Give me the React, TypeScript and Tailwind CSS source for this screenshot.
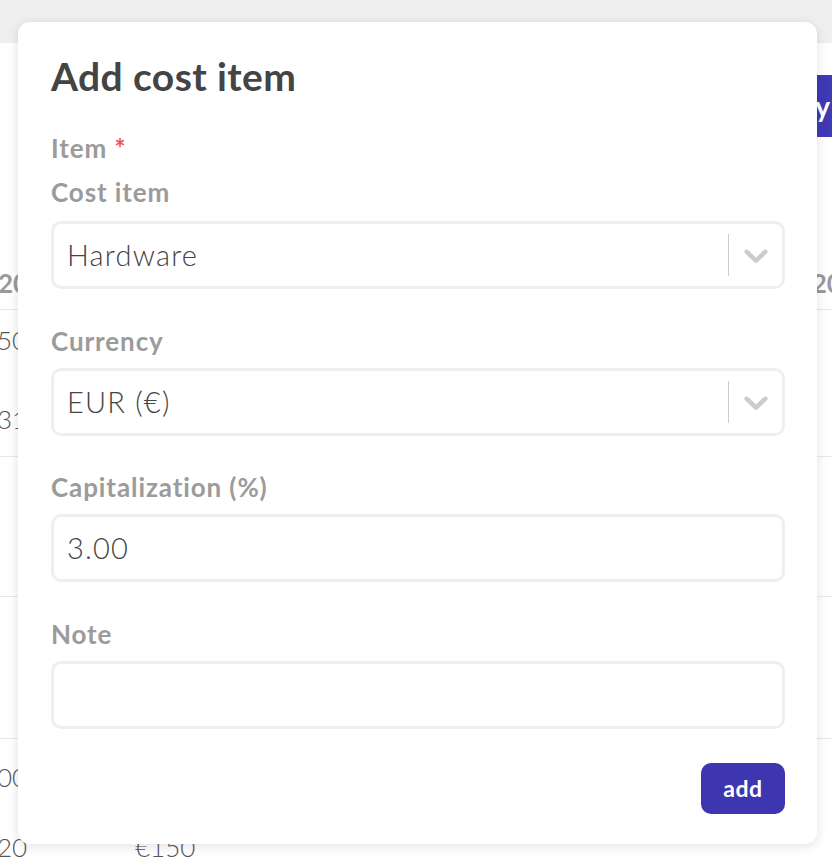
import { ReactNode } from 'react'

const font = { fontFamily: 'Lato, "Noto Sans", sans-serif' }

function Chevron() {
  return (
    <svg className="h-10 w-10 fill-[#cccccc]" viewBox="0 0 20 20" aria-hidden="true">
      <path d="M4.516 7.548c0.436-0.446 1.043-0.481 1.576 0l3.908 3.747 3.908-3.747c0.533-0.481 1.141-0.446 1.574 0 0.436 0.445 0.408 1.197 0 1.615-0.406 0.418-4.695 4.502-4.695 4.502-0.217 0.223-0.502 0.335-0.787 0.335s-0.57-0.112-0.789-0.335c0 0-4.287-4.084-4.695-4.502s-0.436-1.17 0-1.615z" />
    </svg>
  )
}

function Label({ children, className = '' }: { children: ReactNode; className?: string }) {
  return (
    <div className={`h-[30px] text-[26px] leading-[28px] font-bold tracking-[0.9px] text-[#9b9b9b] ${className}`}>
      {children}
    </div>
  )
}

function Select({ value }: { value: string }) {
  return (
    <div className="flex h-[68px] items-center rounded-[10px] border-[3px] border-[#efefef] bg-white">
      <span className="flex-1 pl-[13px] text-[29px] font-light tracking-[1.2px] text-[#444444]">{value}</span>
      <span className="h-[42px] w-px bg-[#cccccc]" />
      <span className="flex w-[53px] items-center justify-center">
        <Chevron />
      </span>
    </div>
  )
}

function Input({ value = '' }: { value?: string }) {
  return (
    <div className="flex h-[68px] items-center rounded-[10px] border-[3px] border-[#efefef] bg-white pl-[13px] text-[29px] font-light tracking-[1.2px] text-[#444444]">
      {value}
    </div>
  )
}

function Background() {
  return (
    <div className="h-[858px] overflow-hidden bg-white text-[26px] font-light text-[#555555]">
      <div className="h-[43px] bg-[#efefef]" />
      <div className="flex justify-end pt-[32px]">
        <div className="-mr-[40px] flex h-[62px] w-[100px] items-center justify-end rounded-[8px] bg-[#3f3ab5] pr-[42px] text-[28px] font-bold text-white">
          ry
        </div>
      </div>
      <div className="mt-[127px] flex h-[46px] items-start justify-between border-b border-[#e8e8e8] font-bold text-[#9b9b9b]">
        <span className="-ml-[2px]">2024</span>
        <span className="-mr-[40px]">2024</span>
      </div>
      <div className="flex h-[147px] justify-between border-b border-[#e8e8e8]">
        <div className="-ml-[3px] flex flex-col pt-[14px]">
          <span className="leading-[32px]">50</span>
          <span className="mt-[47px] leading-[32px]">31</span>
        </div>
        <div className="-mr-[40px] pt-[14px] leading-[32px]">50</div>
      </div>
      <div className="h-[140px] border-b border-[#e8e8e8]" />
      <div className="h-[142px] border-b border-[#e8e8e8]" />
      <div className="flex justify-between">
        <div className="flex">
          <div className="-ml-[3px] flex w-[138px] flex-col pt-[22px]">
            <span className="leading-[32px]">00</span>
            <span className="mt-[38px] leading-[32px]">20</span>
          </div>
          <div className="pt-[92px] leading-[32px]">€150</div>
        </div>
        <div className="-mr-[40px] pt-[22px] leading-[32px]">00</div>
      </div>
    </div>
  )
}

export default function App() {
  return (
    <div className="relative h-[858px] w-[832px] overflow-hidden" style={font}>
      <Background />
      <div className="absolute left-[18px] top-[22px] w-[799px] rounded-[12px] bg-white pb-[30px] pl-[33px] pr-[32px] pt-[34px] shadow-[0_2px_12px_rgba(0,0,0,0.12)]">
        <h2 className="h-10 text-[39px] leading-10 font-bold tracking-[0.4px] text-[#444444]">Add cost item</h2>

        <Label className="mt-[38px]">
          Item <span className="text-[#ef5350]">*</span>
        </Label>
        <Label className="mt-[14px]">Cost item</Label>
        <div className="mt-[13px]">
          <Select value="Hardware" />
        </div>

        <Label className="mt-[38px]">Currency</Label>
        <div className="mt-[11px]">
          <Select value="EUR (€)" />
        </div>

        <Label className="mt-[37px]">Capitalization (%)</Label>
        <div className="mt-[11px]">
          <Input value="3.00" />
        </div>

        <Label className="mt-[38px]">Note</Label>
        <div className="mt-[11px]">
          <Input />
        </div>

        <div className="mt-[34px] flex justify-end">
          <button
            type="button"
            className="h-[51px] w-[84px] rounded-[10px] bg-[#3d36b0] text-[23px] font-bold tracking-[0.5px] text-white"
          >
            add
          </button>
        </div>
      </div>
    </div>
  )
}
